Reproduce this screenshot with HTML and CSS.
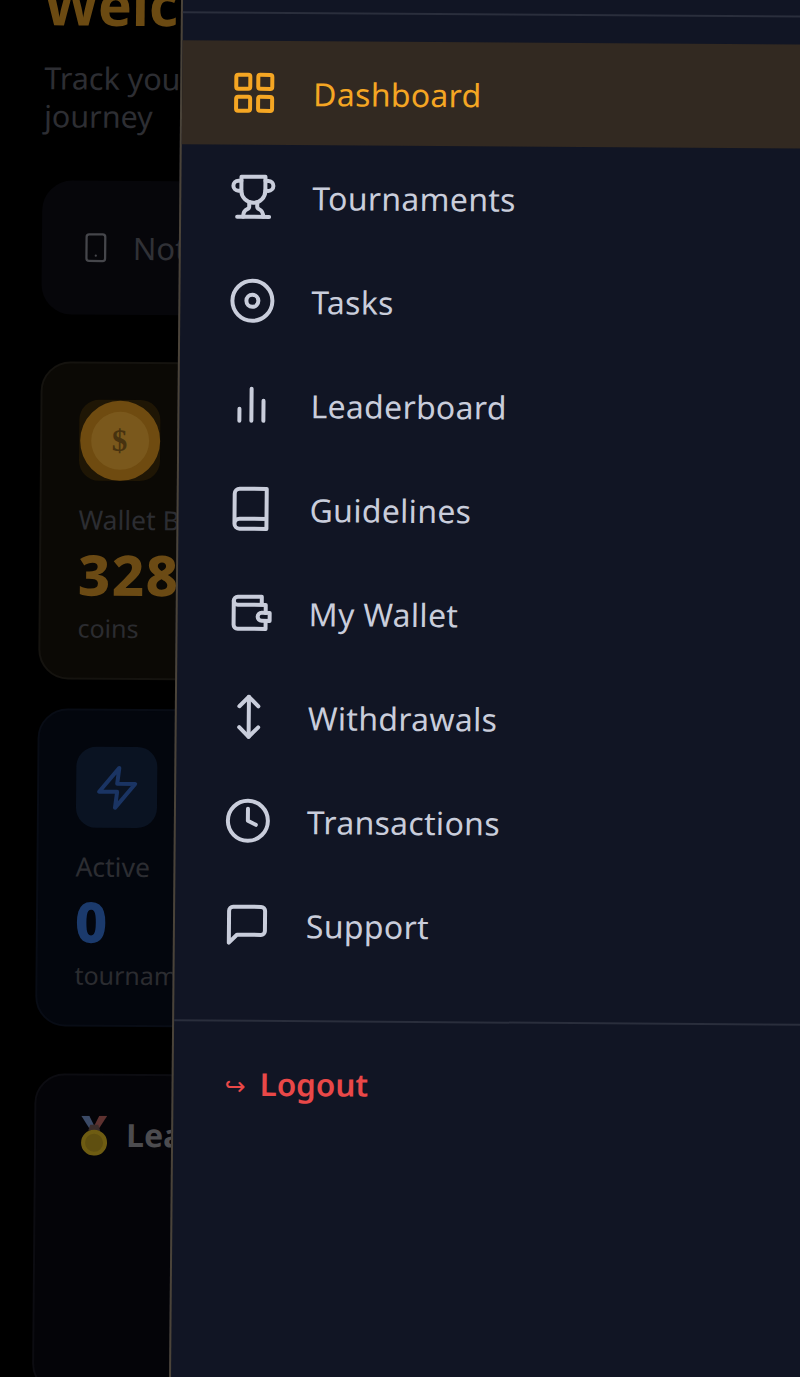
FILE: index.html
```html
<!DOCTYPE html>
<html lang="en">
  <head>
    <meta charset="UTF-8" />
    <meta name="viewport" content="width=device-width, initial-scale=1.0" />
    <title>Dashboard</title>
    <link rel="stylesheet" href="styles.css">
  </head>
  <body>
    <div class="stage">
      <main class="dashboard">
        <h1 class="welcome">Welcome back</h1>
        <p class="subtitle">Track your gaming<br />journey</p>

        <section class="card notice">
          <svg class="notice-icon" viewBox="0 0 24 24"><rect x="5" y="2" width="14" height="20" rx="2" /><path d="M12 18h.01" /></svg>
          <span>Not verified</span>
        </section>

        <section class="card stat stat-wallet">
          <div class="tile tile-coin"><div class="coin"><div class="coin-inner">$</div></div></div>
          <div class="stat-label">Wallet Balance</div>
          <div class="stat-value">3280</div>
          <div class="stat-unit">coins</div>
        </section>

        <section class="card stat stat-active">
          <div class="tile tile-zap">
            <svg class="zap" viewBox="0 0 24 24"><path d="M13 2 3 14h9l-1 8 10-12h-9l1-8z" /></svg>
          </div>
          <div class="stat-label">Active</div>
          <div class="stat-value">0</div>
          <div class="stat-unit">tournaments</div>
        </section>

        <section class="card board">
          <svg class="medal" viewBox="0 0 28 40">
            <path d="M1 0h8l7 14h-6z" fill="#3b4a66" />
            <path d="M27 0h-8l-7 14h6z" fill="#5e3230" />
            <path d="M10 9h8l2 6H8z" fill="#3a2c2a" />
            <circle cx="14" cy="27" r="13" fill="#6e5c12" />
            <circle cx="14" cy="27" r="9" fill="#5f4f10" />
          </svg>
          <h2>Leaderboard</h2>
        </section>
      </main>

      <aside class="drawer">
        <div class="drawer-head"></div>
        <nav class="menu">
          <a class="menu-item active">
            <svg class="icon" viewBox="0 0 24 24"><rect x="3" y="3" width="7" height="7" rx="1" /><rect x="14" y="3" width="7" height="7" rx="1" /><rect x="14" y="14" width="7" height="7" rx="1" /><rect x="3" y="14" width="7" height="7" rx="1" /></svg>
            <span>Dashboard</span>
          </a>
          <a class="menu-item">
            <svg class="icon" viewBox="0 0 24 24"><path d="M6 9H4.5a2.5 2.5 0 0 1 0-5H6" /><path d="M18 9h1.5a2.5 2.5 0 0 0 0-5H18" /><path d="M4 22h16" /><path d="M10 14.66V17c0 .55-.47.98-.97 1.21C7.85 18.75 7 20.24 7 22" /><path d="M14 14.66V17c0 .55.47.98.97 1.21C16.15 18.75 17 20.24 17 22" /><path d="M18 2H6v7a6 6 0 0 0 12 0V2Z" /></svg>
            <span>Tournaments</span>
          </a>
          <a class="menu-item">
            <svg class="icon" viewBox="0 0 24 24"><circle cx="12" cy="12" r="10" /><circle cx="12" cy="12" r="3" /></svg>
            <span>Tasks</span>
          </a>
          <a class="menu-item">
            <svg class="icon" viewBox="0 0 24 24"><path d="M18 20V10" /><path d="M12 20V4" /><path d="M6 20v-6" /></svg>
            <span>Leaderboard</span>
          </a>
          <a class="menu-item">
            <svg class="icon" viewBox="0 0 24 24"><path d="M4 19.5v-15A2.5 2.5 0 0 1 6.5 2H20v20H6.5a2.5 2.5 0 0 1 0-5H20" /></svg>
            <span>Guidelines</span>
          </a>
          <a class="menu-item">
            <svg class="icon" viewBox="0 0 24 24"><path d="M20 12V8H6a2 2 0 0 1-2-2c0-1.1.9-2 2-2h12v4" /><path d="M4 6v12c0 1.1.9 2 2 2h14v-4" /><path d="M18 12a2 2 0 0 0-2 2c0 1.1.9 2 2 2h4v-4h-4z" /></svg>
            <span>My Wallet</span>
          </a>
          <a class="menu-item">
            <svg class="icon" viewBox="0 0 24 24"><path d="M12 2v20" /><path d="m7.25 17.25 4.75 4.75 4.75-4.75" /><path d="m7.25 6.75 4.75-4.75 4.75 4.75" /></svg>
            <span>Withdrawals</span>
          </a>
          <a class="menu-item">
            <svg class="icon" viewBox="0 0 24 24"><circle cx="12" cy="12" r="10" /><path d="M12 6v6l4 2" /></svg>
            <span>Transactions</span>
          </a>
          <a class="menu-item">
            <svg class="icon" viewBox="0 0 24 24"><path d="M21 15a2 2 0 0 1-2 2H7l-4 4V5a2 2 0 0 1 2-2h14a2 2 0 0 1 2 2z" /></svg>
            <span>Support</span>
          </a>
        </nav>
        <div class="drawer-foot">
          <a class="logout"><span class="logout-arrow">↪</span><span>Logout</span></a>
        </div>
      </aside>
    </div>
  </body>
</html>
```

FILE: styles.css
```css
html,
body {
  margin: 0;
  height: 100%;
  background-color: #000;
  overflow: hidden;
}

body {
  font-family: "Noto Sans", sans-serif;
}

/* the whole screen is photographed slightly off-axis */
.stage {
  position: relative;
  display: flow-root;
  width: 815px;
  height: 1380px;
  transform: matrix(1, 0.007, -0.0087, 1, 0, 0);
  transform-origin: 0 0;
}

.dashboard {
  display: flex;
  flex-direction: column;
  width: 720px;
  padding: 0 44px;
  margin-top: -22px;
}

.welcome {
  margin: 0;
  font-size: 57px;
  line-height: 50px;
  font-weight: 700;
  color: #6b4a12;
  white-space: nowrap;
}

.subtitle {
  margin: 30px 0 0 1px;
  font-size: 30.5px;
  line-height: 38px;
  color: #2d2e33;
}

.card {
  border-radius: 30px;
  box-sizing: border-box;
}

.notice {
  display: flex;
  align-items: center;
  gap: 21px;
  height: 134px;
  margin-top: 46px;
  padding-left: 38px;
  background-color: #06060a;
  font-size: 31px;
  color: #303136;
}

.notice-icon {
  width: 32px;
  height: 36px;
  fill: none;
  stroke: #45464b;
  stroke-width: 1.7;
  stroke-linecap: round;
  stroke-linejoin: round;
}

.stat {
  height: 318px;
  margin-top: 47px;
  padding: 36px 37px 0;
  border: 2px solid #15130f;
}

.stat-wallet {
  background-color: #0b0905;
}

.stat-active {
  margin-top: 29px;
  background-color: #03060d;
  border-color: #080c15;
}

.tile {
  display: flex;
  align-items: center;
  justify-content: center;
  width: 81px;
  height: 81px;
  border-radius: 20px;
}

.tile-coin {
  background-color: #1f1605;
}

.tile-zap {
  background-color: #0a1322;
}

.coin {
  display: flex;
  align-items: center;
  justify-content: center;
  width: 80px;
  height: 80px;
  border-radius: 50%;
  background-color: #6f4b10;
}

.coin-inner {
  display: flex;
  align-items: center;
  justify-content: center;
  width: 58px;
  height: 58px;
  border-radius: 50%;
  background-color: #7a581c;
  font-family: "Liberation Serif", serif;
  font-size: 31px;
  font-weight: 700;
  color: #47320f;
}

.zap {
  width: 48px;
  height: 48px;
  fill: none;
  stroke: #1a3463;
  stroke-width: 2;
  stroke-linejoin: round;
  stroke-linecap: round;
}

.stat-label {
  margin-top: 19px;
  font-size: 26.5px;
  line-height: 40px;
  color: #2c2d32;
  white-space: nowrap;
}

.stat-value {
  margin-top: 6px;
  font-size: 56px;
  line-height: 56px;
  font-weight: 800;
  letter-spacing: 1.5px;
  color: #6b4a14;
}

.stat-active .stat-value {
  color: #1b3a6c;
}

.stat-unit {
  margin-top: 6px;
  font-size: 25px;
  line-height: 40px;
  color: #2b2c30;
  white-space: nowrap;
}

.board {
  display: flex;
  align-items: flex-start;
  gap: 18px;
  height: 320px;
  margin-top: 47px;
  padding: 40px 44px;
  background-color: #040408;
  border: 2px solid #0c0c11;
}

.medal {
  flex: none;
  width: 28px;
  height: 40px;
}

.board h2 {
  margin: 0;
  font-size: 32px;
  line-height: 38px;
  color: #4c4c4f;
}

.drawer {
  position: absolute;
  top: -30px;
  left: 181px;
  right: 0;
  bottom: 0;
  box-sizing: border-box;
  background-color: #111524;
  border-left: 2px solid #4a4339;
}

.drawer-head {
  height: 40px;
  border-bottom: 2px solid #2a2e3c;
}

.menu {
  display: flex;
  flex-direction: column;
  margin-top: 27px;
}

.menu-item {
  display: flex;
  align-items: center;
  gap: 35px;
  height: 104px;
  padding-left: 48px;
  font-size: 32px;
  letter-spacing: 0.3px;
  color: #c9cddb;
}

.menu-item.active {
  background-color: #322921;
  color: #f5a623;
}

.icon {
  flex: none;
  width: 48px;
  height: 48px;
  fill: none;
  stroke: currentColor;
  stroke-width: 2;
  stroke-linecap: round;
  stroke-linejoin: round;
}

.drawer-foot {
  margin-top: 43px;
  padding: 34px 0 0 51px;
  border-top: 2px solid #2a2e3c;
}

.logout {
  display: flex;
  align-items: center;
  gap: 14px;
  font-size: 31.5px;
  line-height: 50px;
  font-weight: 600;
  color: #e94848;
}

.logout-arrow {
  font-family: "DejaVu Sans", sans-serif;
  font-size: 25px;
  font-weight: 400;
  padding-top: 6px;
}
```
